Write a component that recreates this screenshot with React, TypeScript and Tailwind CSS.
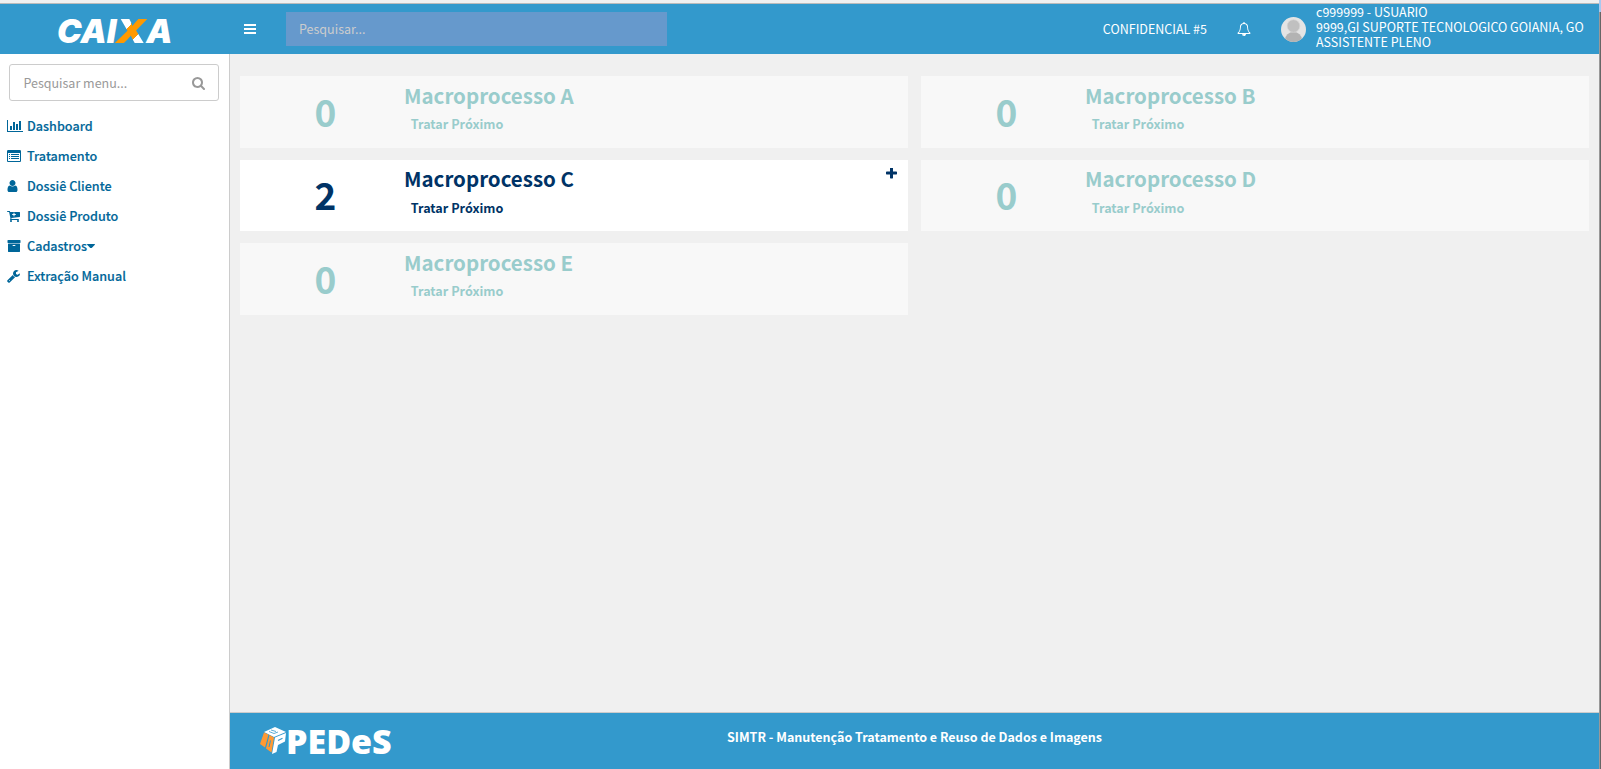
import type { ReactNode } from "react";

type IconProps = { className?: string; box?: string; children: ReactNode };

function Icon({ className = "", box = "0 0 1792 1792", children }: IconProps) {
  return (
    <svg viewBox={box} fill="currentColor" className={"shrink-0 " + className} aria-hidden="true">
      {children}
    </svg>
  );
}

const ChartIcon = () => (
  <Icon box="0 0 2048 1792" className="h-3.5 w-4">
    <path d="M640 896v512H384V896h256zm384-512v1024H768V384h256zm1024 1152v128H0V128h128v1408h1920zm-640-896v768h-256V640h256zm384-384v1152h-256V256h256z" />
  </Icon>
);

const ListIcon = () => (
  <Icon className="h-3.5 w-3.5">
    <path
      fillRule="evenodd"
      d="M160 128h1472q66 0 113 47t47 113v1216q0 66-47 113t-113 47H160q-66 0-113-47T0 1504V288q0-66 47-113t113-47zM128 512v992q0 13 9.500 22.500T160 1536h1472q13 0 22.500-9.500t9.500-22.500V512H128zM256 640h128v128H256zM512 640h1024v128H512zM256 896h128v128H256zM512 896h1024v128H512zM256 1152h128v128H256zM512 1152h1024v128H512z"
    />
  </Icon>
);

const UserIcon = () => (
  <Icon box="256 0 1280 1792" className="h-3.5 w-[11px]">
    <path d="M1536 1399q0 109-62.500 187t-150.500 78H469q-88 0-150.500-78T256 1399q0-85 8.500-160.500t31.500-152 58.500-131 94-89T583 832q131 128 313 128t313-128q76 0 134.500 34.500t94 89 58.500 131 31.500 152 8.500 160.500zm-256-887q0 159-112.500 271.500T896 896 624.500 783.500 512 512t112.500-271.500T896 128t271.500 112.500T1280 512z" />
  </Icon>
);

const CartIcon = () => (
  <Icon box="64 0 1664 1792" className="h-3.5 w-[13px]">
    <path d="M1216 704q0-26-19-45t-45-19h-128V512q0-26-19-45t-45-19-45 19-19 45v128H768q-26 0-45 19t-19 45 19 45 45 19h128v128q0 26 19 45t45 19 45-19 19-45V768h128q26 0 45-19t19-45zm-512 832q0 53-37.500 90.500T576 1664t-90.500-37.500T448 1536t37.500-90.500T576 1408t90.500 37.500T704 1536zm896 0q0 53-37.500 90.500T1472 1664t-90.500-37.500T1344 1536t37.500-90.500T1472 1408t90.500 37.500T1600 1536zm128-1088v512q0 24-16 42.500t-41 21.500L627 1146q1 7 4.500 21.500t6 26.500 2.500 22q0 16-24 64h920q26 0 45 19t19 45-19 45-45 19H512q-26 0-45-19t-19-45q0-14 11-39.500t29.500-59.500 20.500-38L332 384H128q-26 0-45-19t-19-45 19-45 45-19h256q16 0 28.500 6.500T432 278t13 24.500 8 26 5.500 29.500 4.500 26h1201q26 0 45 19t19 45z" />
  </Icon>
);

const ArchiveIcon = () => (
  <Icon className="h-3.5 w-3.5">
    <path d="M1088 832q0-26-19-45t-45-19H768q-26 0-45 19t-19 45 19 45 45 19h256q26 0 45-19t19-45zm576-192v960q0 26-19 45t-45 19H192q-26 0-45-19t-19-45V640q0-26 19-45t45-19h1408q26 0 45 19t19 45zm64-448v256q0 26-19 45t-45 19H128q-26 0-45-19t-19-45V192q0-26 19-45t45-19h1536q26 0 45 19t19 45z" />
  </Icon>
);

const WrenchIcon = () => (
  <Icon box="64 0 1728 1792" className="h-3.5 w-[13.5px]">
    <path d="M448 1472q0-26-19-45t-45-19-45 19-19 45 19 45 45 19 45-19 19-45zm644-420l-682 682q-37 37-90 37-52 0-91-37L123 1628q-38-36-38-90 0-53 38-91l681-681q39 98 114.500 173.500T1092 1052zm634-435q0 39-23 106-47 134-164.500 217.500T1280 1024q-185 0-316.500-131.500T832 576t131.500-316.500T1280 128q58 0 121.500 16.500T1509 191q16 11 16 28t-16 28l-293 169v224l193 107q5-3 79-48.500t135.500-81T1695 583q15 0 23 10t8 24z" />
  </Icon>
);

const menu: { label: string; icon: ReactNode; caret?: boolean }[] = [
  { label: "Dashboard", icon: <ChartIcon /> },
  { label: "Tratamento", icon: <ListIcon /> },
  { label: "Dossiê Cliente", icon: <UserIcon /> },
  { label: "Dossiê Produto", icon: <CartIcon /> },
  { label: "Cadastros", icon: <ArchiveIcon />, caret: true },
  { label: "Extração Manual", icon: <WrenchIcon /> },
];

const cards = [
  { name: "Macroprocesso A", count: 0 },
  { name: "Macroprocesso B", count: 0 },
  { name: "Macroprocesso C", count: 2 },
  { name: "Macroprocesso D", count: 0 },
  { name: "Macroprocesso E", count: 0 },
];

function Card({ name, count }: { name: string; count: number }) {
  const active = count > 0;
  return (
    <section
      className={
        "flex h-[71.5px] font-bold " + (active ? "bg-white text-[#003366]" : "bg-[#f8f8f8] text-[#99cccc]")
      }
    >
      <div className="flex w-[164px] justify-center pl-[7px] pt-[10.6px] text-[37px] leading-[48px]">{count}</div>
      <div className="flex-1">
        <h2 className="pt-[6.6px] text-[20.5px] leading-6">{name}</h2>
        <p className="pl-[6.8px] pt-[9.9px] text-[12.6px] leading-4">Tratar Próximo</p>
      </div>
      {active && (
        <Icon box="192 192 1408 1408" className="mr-[11px] mt-[8px] h-[11px] w-[11px]">
          <path d="M1600 736v192q0 40-28 68t-68 28h-416v416q0 40-28 68t-68 28H800q-40 0-68-28t-28-68v-416H288q-40 0-68-28t-28-68V736q0-40 28-68t68-28h416V224q0-40 28-68t68-28h192q40 0 68 28t28 68v416h416q40 0 68 28t28 68z" />
        </Icon>
      )}
    </section>
  );
}

function Header() {
  return (
    <header className="flex h-[50px] shrink-0 items-center bg-[#3399cc] text-[12.5px] text-white">
      <div className="flex w-[230px] items-center pl-[57px] pt-[4px] font-[Inter,sans-serif] text-[33px] font-black italic leading-none">
        <span>CAI</span>
        <span className="-mx-0.5 scale-x-[1.18] bg-[linear-gradient(129deg,#fff_40%,#ff9900_40%,#ff9900_64%,#fff_64%)] bg-clip-text px-1 text-transparent">
          X
        </span>
        <span>A</span>
      </div>
      <svg viewBox="0 0 12 10" className="ml-[14px] h-[10px] w-3" fill="currentColor" aria-hidden="true">
        <path d="M0 0h12v2H0zM0 4h12v2H0zM0 8h12v2H0z" />
      </svg>
      <div className="ml-[30px] flex h-[34px] w-[381px] items-center bg-[#6699cc] pl-[13px] text-[#cccccc]">
        Pesquisar...
      </div>
      <div className="ml-auto">CONFIDENCIAL #5</div>
      <Icon className="ml-[30px] h-3.5 w-3.5">
        <path d="M912 1696q0-16-16-16-59 0-101.500-42.500T752 1536q0-16-16-16t-16 16q0 73 51.500 124.500T896 1712q16 0 16-16zM246 1408h1300q-266-300-266-832 0-51-24-105t-69-103-121.500-80.500T896 256t-169.500 31.500T605 368t-69 103-24 105q0 532-266 832zm1482 0q0 52-38 90t-90 38h-448q0 106-75 181t-181 75-181-75-75-181H192q-52 0-90-38t-38-90q50-42 91-88t85-119.500 74.500-158.500 50-206T384 576q0-152 117-282.500T808 135q-8-19-8-39 0-40 28-68t68-28 68 28 28 68q0 20-8 39 190 28 307 158.500T1408 576q0 139 19.500 260t50 206 74.500 158.500 85 119.500 91 88z" />
      </Icon>
      <svg viewBox="0 0 25 25" className="ml-[30px] h-[25px] w-[25px] rounded-full" aria-hidden="true">
        <rect width="25" height="25" fill="#e4e4e4" />
        <ellipse cx="12.500" cy="23" rx="8.500" ry="8" fill="#b3b3b3" />
        <circle cx="12.500" cy="9" r="6.300" fill="#c0c0c0" stroke="#d6d6d6" strokeWidth="0.700" />
      </svg>
      <div className="-mt-[5px] ml-[10px] w-[283px] leading-[15px]">
        <div>c999999 - USUARIO</div>
        <div className="whitespace-nowrap">9999,GI SUPORTE TECNOLOGICO GOIANIA, GO</div>
        <div>ASSISTENTE PLENO</div>
      </div>
    </header>
  );
}

function Sidebar() {
  return (
    <aside className="w-[230px] shrink-0 border-r border-[#cccccc] bg-white pt-[10px]">
      <div className="ml-[9px] flex h-[37px] w-[210px] items-center justify-between rounded-[3px] border border-[#cccccc] pl-[13.4px] pr-[13px] text-[12.5px] text-[#999999]">
        <span className="pt-0.5">Pesquisar menu...</span>
        <Icon box="64 128 1664 1664" className="mt-px h-[13px] w-[13px]">
          <path d="M1216 832q0-185-131.500-316.500T768 384 451.500 515.500 320 832t131.500 316.500T768 1280t316.500-131.500T1216 832zm512 832q0 52-38 90t-90 38q-54 0-90-38l-343-342q-179 124-399 124-143 0-273.500-55.500t-225-150-150-225T64 832t55.500-273.500 150-225 225-150T768 128t273.500 55.500 225 150 150 225T1472 832q0 220-124 399l343 343q37 37 37 90z" />
        </Icon>
      </div>
      <nav className="pt-[10px] text-[12.6px] font-medium text-[#006699] [-webkit-text-stroke:0.15px_#006699]">
        {menu.map(({ label, icon, caret }) => (
          <a key={label} className="flex h-[30px] items-center pl-[7px]">
            <span className="w-5 pb-px">{icon}</span>
            <span>{label}</span>
            {caret && (
              <Icon box="384 640 1024 576" className="h-[4.500px] w-2">
                <path d="M1408 704q0 26-19 45l-448 448q-19 19-45 19t-45-19L403 749q-19-19-19-45t19-45 45-19h896q26 0 45 19t19 45z" />
              </Icon>
            )}
          </a>
        ))}
      </nav>
    </aside>
  );
}

function Footer() {
  return (
    <footer className="flex h-[57px] shrink-0 border-t border-[#cccccc] bg-[#3399cc] text-white">
      <div className="flex w-[497px] items-start pl-[30px] pt-[14px]">
        <svg viewBox="0 0 26 28" className="h-7 w-[26px]" aria-hidden="true">
          <path d="M15 0 26 5 14 10 4 5z" fill="#fff" />
          <path d="M9 4.500l5 2 4-1.500M11 3l5 1.500" stroke="#3399cc" strokeWidth="0.800" fill="none" />
          <path d="M4 5.500 8.500 7.500 5 20.500 0 17z" fill="#ff9933" />
          <path d="M9.500 8 14 10.500 11.500 25.500 6 21.500z" fill="#ff9933" />
          <path d="M10.500 13.500 9 20" stroke="#3399cc" strokeWidth="1" fill="none" />
          <path d="M15 10.500 26 6 25 14.500 18 18 16.500 25 12 27z" fill="#fff" />
          <path d="M18 13.500l4.500-2.300" stroke="#3399cc" strokeWidth="1.200" fill="none" />
        </svg>
        <span className="-mt-px font-['Open_Sans',sans-serif] text-[34px] font-extrabold leading-[31px]">PEDeS</span>
      </div>
      <div className="pt-[16px] text-[12.5px] font-bold leading-4">
        SIMTR - Manutenção Tratamento e Reuso de Dados e Imagens
      </div>
    </footer>
  );
}

export default function App() {
  return (
    <div className="flex h-[769px] w-[1601px] overflow-hidden bg-[#f0f0f0] font-['Noto_Sans_CJK_SC',sans-serif]">
      <div className="flex w-[1599px] flex-col">
        <div className="h-1 shrink-0 border-b border-[#bbbbbb]" />
        <Header />
        <div className="flex min-h-0 flex-1">
          <Sidebar />
          <div className="flex flex-1 flex-col">
            <main className="grid flex-1 grid-cols-2 content-start gap-x-[13px] gap-y-3 pl-[10px] pr-[10px] pt-[22px]">
              {cards.map((c) => (
                <Card key={c.name} {...c} />
              ))}
            </main>
            <Footer />
          </div>
        </div>
      </div>
      <div className="flex w-0.5 flex-col">
        <div className="h-3 bg-[#a8c8f0]" />
        <div className="flex-1 border-l border-[#999999] bg-[#666666]" />
      </div>
    </div>
  );
}
